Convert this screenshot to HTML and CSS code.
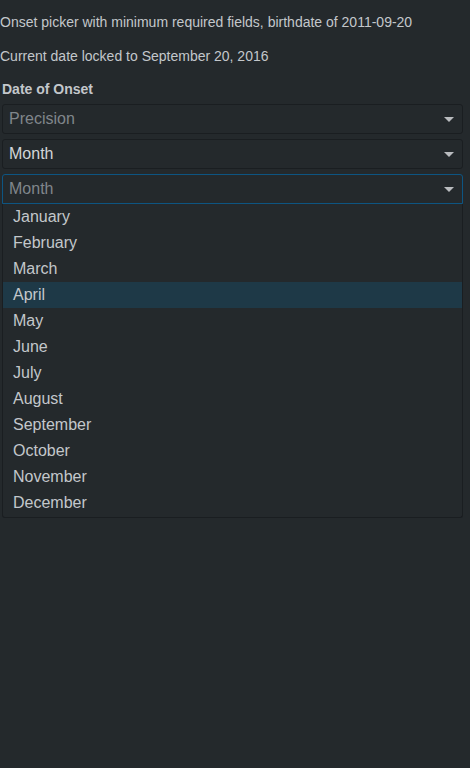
FILE: index.html
```html
<!DOCTYPE html>
<html>
<head>
<meta charset="utf-8">
<link rel="stylesheet" href="styles.css">
</head>
<body>
<p class="note first">Onset picker with minimum required fields, birthdate of 2011-09-20</p>
<p class="note">Current date locked to September 20, 2016</p>
<div class="field">
  <div class="label">Date of Onset</div>
  <div class="select">
    <span class="value placeholder">Precision</span>
    <span class="arrow"></span>
  </div>
  <div class="select">
    <span class="value">Month</span>
    <span class="arrow"></span>
  </div>
  <div class="dropdown">
    <div class="select focused">
      <span class="value placeholder">Month</span>
      <span class="arrow"></span>
    </div>
    <ul class="menu">
      <li>January</li>
      <li>February</li>
      <li>March</li>
      <li class="active">April</li>
      <li>May</li>
      <li>June</li>
      <li>July</li>
      <li>August</li>
      <li>September</li>
      <li>October</li>
      <li>November</li>
      <li>December</li>
    </ul>
  </div>
</div>
</body>
</html>
```
FILE: styles.css
```css
html, body {
  margin: 0;
  padding: 0;
  background: #24292c;
  height: 100%;
}
body {
  font-family: "Liberation Sans", Arial, sans-serif;
  font-size: 14px;
  color: #c3c7cb;
}
.note {
  margin: 0;
  line-height: 20px;
  height: 20px;
}
.note.first {
  margin-top: 12px;
  margin-bottom: 14px;
}
.field {
  padding: 0 7px 0 2px;
  margin-top: 13px;
}
.label {
  font-weight: bold;
  line-height: 20px;
  margin-bottom: 5px;
  color: #c3c7cb;
}
.select {
  box-sizing: border-box;
  height: 30px;
  border: 1px solid #1a1e21;
  border-radius: 3px;
  background: #24292c;
  display: flex;
  align-items: center;
  padding: 0 8px 0 6px;
  margin-bottom: 5px;
  font-size: 16px;
}
.select.focused {
  border-color: #0d5582;
  margin-bottom: 0;
  border-radius: 3px 3px 0 0;
}
.value {
  flex: 1;
  color: #d3d6d9;
}
.value.placeholder {
  color: #80868b;
}
.arrow {
  width: 0;
  height: 0;
  border-left: 5px solid transparent;
  border-right: 5px solid transparent;
  border-top: 5px solid #b9bcbf;
}
.menu {
  list-style: none;
  margin: 0;
  padding: 0 0 1px 0;
  border: 1px solid #1a1e21;
  border-top: none;
  border-radius: 0 0 3px 3px;
  background: #24292c;
}
.menu li {
  height: 26px;
  line-height: 26px;
  padding-left: 10px;
  font-size: 16px;
  color: #c3c7cb;
}
.menu li.active {
  background: #1e3947;
}
```
